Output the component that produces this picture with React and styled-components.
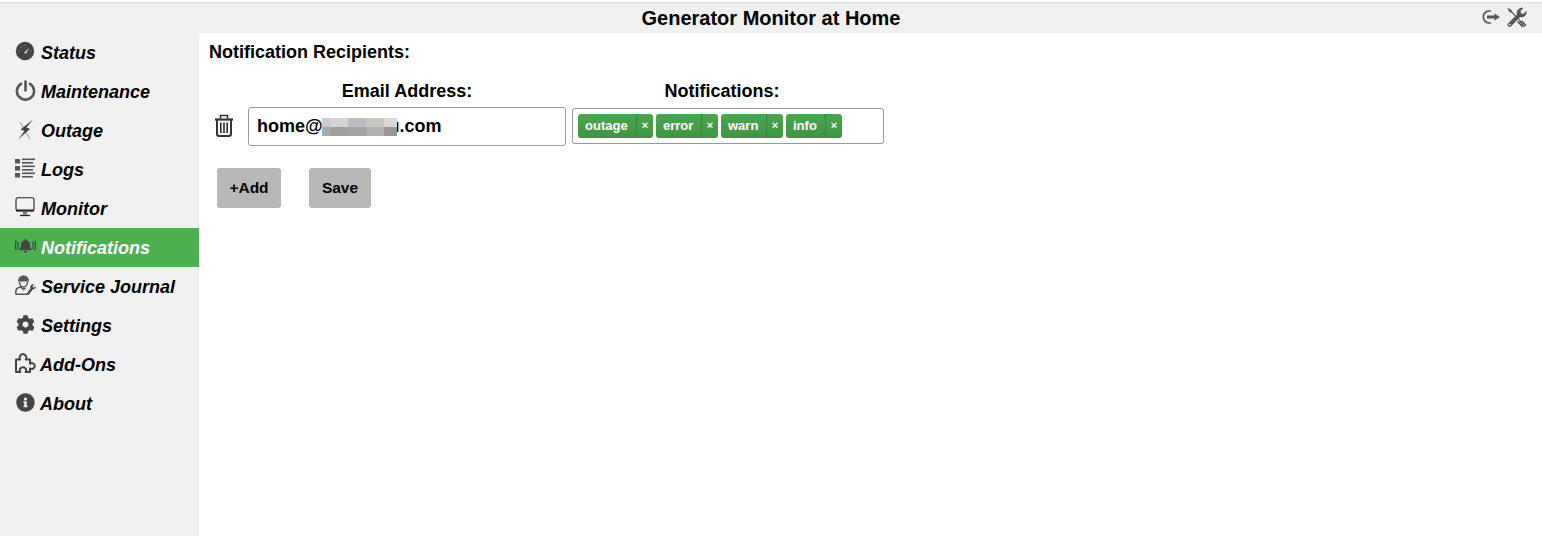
import React from "react";
import styled, { createGlobalStyle } from "styled-components";
import { FaCog, FaInfoCircle } from "react-icons/fa";

const Global = createGlobalStyle`
  html, body { margin: 0; padding: 0; background: #fff; }
  body { font-family: "Liberation Sans", Arial, sans-serif; }
`;

const Page = styled.div`
  height: 536px;
  overflow: hidden;
  padding-top: 2px;
  box-sizing: border-box;
  display: flex;
  flex-direction: column;
`;

const Header = styled.header`
  height: 31px;
  box-sizing: border-box;
  flex: none;
  border-top: 1px solid #ddd;
  background: #f0f0f0;
  display: flex;
  align-items: center;
  justify-content: center;
  position: relative;
`;

const Title = styled.h1`
  margin: 0;
  font-size: 20px;
  font-weight: bold;
  color: #000;
`;

const HeaderTools = styled.div`
  position: absolute;
  right: 15px;
  top: 4px;
  display: flex;
  gap: 5px;
  align-items: center;
`;

const Body = styled.div`
  flex: 1;
  display: flex;
  min-height: 0;
`;

const Sidebar = styled.nav`
  width: 199px;
  flex: none;
  background: #f1f1f1;
`;

const NavItem = styled.a`
  display: flex;
  align-items: center;
  height: 39px;
  box-sizing: border-box;
  padding: 2px 0 0 15px;
  font-size: 18px;
  font-weight: bold;
  font-style: italic;
  color: ${(p) => (p.$active ? "#fff" : "#000")};
  background: ${(p) => (p.$active ? "#4caf50" : "transparent")};
`;

const NavIcon = styled.span`
  width: ${(p) => (p.$tight ? 25 : 26)}px;
  height: 24px;
  margin-top: -5px;
  flex: none;
  color: #444;
  display: flex;
  align-items: center;
  svg { display: block; }
`;

const Main = styled.main`
  flex: 1;
  padding: 9px 10px;
`;

const Heading = styled.div`
  font-size: 18px;
  font-weight: bold;
  line-height: 20px;
  color: #000;
`;

const Columns = styled.div`
  display: flex;
  margin: 19px 0 0 39px;
  gap: 6px;
`;

const ColumnLabel = styled.div`
  width: ${(p) => p.$width}px;
  text-align: center;
  font-size: 18px;
  font-weight: bold;
  line-height: 20px;
  color: #000;
`;

const Row = styled.div`
  display: flex;
  align-items: flex-start;
  margin-top: 6px;
  gap: 6px;
`;

const TrashSlot = styled.span`
  width: 33px;
  padding: 7px 0 0 6px;
  flex: none;
  box-sizing: border-box;
  display: flex;
  color: #333;
`;

const EmailBox = styled.div`
  width: 318px;
  height: 39px;
  box-sizing: border-box;
  border: 1px solid #999;
  border-radius: 3px;
  padding-left: 8px;
  display: flex;
  align-items: center;
  font-size: 18px;
  font-weight: bold;
  color: #000;
  background: #fff;
`;

const Redacted = styled.span`
  display: grid;
  grid-template-columns: 8px 18px 18px 18px 13px;
  grid-template-rows: 9px 9px;
  position: relative;
  margin: 0 -8px 0 -1px;
  z-index: 1;
`;

const Pixel = styled.i`
  display: block;
  background: ${(p) => p.$color};
`;

const TagBox = styled.div`
  width: 312px;
  height: 36px;
  margin-top: 1px;
  box-sizing: border-box;
  border: 1px solid #999;
  border-radius: 3px;
  padding: 5px;
  display: flex;
  gap: 3px;
  background: #fff;
`;

const Tag = styled.span`
  display: flex;
  height: 24px;
  box-sizing: border-box;
  border-radius: 3px;
  background: linear-gradient(#4aa64e, #3f9443);
  color: #fff;
  font-size: 13px;
  font-weight: bold;
  line-height: 23px;
`;

const TagText = styled.span`
  padding: 0 7px;
  width: ${(p) => p.$width}px;
  box-sizing: border-box;
  white-space: nowrap;
`;

const TagClose = styled.span`
  width: 17px;
  border-left: 1px solid #37853b;
  box-sizing: border-box;
  text-align: center;
  font-size: 11px;
`;

const Actions = styled.div`
  display: flex;
  gap: 28px;
  margin: 22px 0 0 8px;
`;

const Button = styled.button`
  height: 40px;
  width: ${(p) => p.$width}px;
  padding: 0;
  border: 0;
  border-radius: 3px;
  background: #b8b8b8;
  color: #000;
  font-family: inherit;
  font-size: 15.5px;
  font-weight: bold;
`;

const GaugeIcon = () => (
  <svg width="20" height="20" viewBox="0 0 20 20">
    <circle cx="10" cy="10" r="9.200" fill="#444" />
    <path d="M9 11.800 14.600 6.600 10.800 13Z" fill="#ccc" />
    <g fill="#777">
      <circle cx="4" cy="10" r=".8" /><circle cx="5.600" cy="6" r=".8" />
      <circle cx="10" cy="4" r=".8" /><circle cx="16" cy="10" r=".8" />
    </g>
  </svg>
);

const PowerIcon = () => (
  <svg width="21" height="21" viewBox="0 0 21 21" fill="none" stroke="#555" strokeWidth="2.600" strokeLinecap="round">
    <path d="M10.500 1.500v9" />
    <path d="M6 3.800a8.600 8.600 0 1 0 9 0" />
  </svg>
);

const BoltIcon = () => (
  <svg width="20" height="21" viewBox="0 0 20 21">
    <path d="M5 3 15 20" stroke="#aaa" strokeWidth="1.200" />
    <path d="M18 .5 5.500 10.500 9.500 12 3 20.500 15 10 11.500 8.500Z" fill="#444" />
  </svg>
);

const ListIcon = () => (
  <svg width="20" height="21" viewBox="0 0 20 21" fill="#555">
    <rect x="0" y="1" width="5" height="4.500" /><rect x="0" y="8" width="5" height="4.500" /><rect x="0" y="15" width="5" height="4.500" />
    <rect x="7" y="0.500" width="13" height="1.600" /><rect x="7" y="4" width="11" height="1.600" />
    <rect x="7" y="7.500" width="13" height="1.600" /><rect x="7" y="11" width="11" height="1.600" />
    <rect x="7" y="14.500" width="13" height="1.600" /><rect x="7" y="18" width="11" height="1.600" />
  </svg>
);

const MonitorIcon = () => (
  <svg width="20" height="20" viewBox="0 0 20 20" fill="none" stroke="#222">
    <rect x="1" y="0.800" width="18" height="13" rx="2" strokeWidth="1.100" />
    <path d="M1 13.500h18" strokeWidth="2" />
    <path d="M9 15v2.500M11 15v2.500" strokeWidth="1.200" />
    <path d="M5 18.500h10" strokeWidth="1.300" />
  </svg>
);

const BellIcon = () => (
  <svg width="21" height="17" viewBox="0 0 21 17" fill="none" stroke="#444" strokeWidth="1.200">
    <path d="M3.500 4Q2 7.500 3.500 11M1.200 2.500Q-.4 7.500 1.200 12.500M17.500 4q1.500 3.500 0 7M19.800 2.500q1.600 5 0 10" />
    <path
      transform="translate(3.550 1) scale(0.65)"
      stroke="none"
      fill="#444"
      d="M10.700 21.300a2.700 2.700 0 0 0 2.700-2.700H8a2.700 2.700 0 0 0 2.700 2.700zM19.800 15c-.8-.9-2.300-2.200-2.300-6.500 0-3.300-2.300-5.900-5.400-6.500v-.9a1.400 1.400 0 0 0-2.800 0V2C6.200 2.600 3.900 5.200 3.900 8.500c0 4.300-1.500 5.600-2.300 6.500-.3.300-.4.600-.4.900 0 .7.500 1.300 1.400 1.300h16.200c.8 0 1.400-.6 1.400-1.300 0-.3-.1-.600-.4-.9z"
    />
  </svg>
);

const JournalIcon = () => (
  <svg width="21" height="20" viewBox="0 0 21 20" fill="none" stroke="#555" strokeWidth="1.500">
    <path d="M3 6.500C3 2.500 5.500.5 8.500.5S14 2.500 14 6.500Z" fill="#555" stroke="none" />
    <path d="M4.500 7c0 3 2 5 4 5s4-2 4-5" />
    <path d="M.800 19.200V16.500c0-2.500 2-4 4.700-4.500l3 2.500 2-1.500M.800 19.200H12" />
    <path d="M11 19.800 15.500 13.500c-.6-1.200-.2-2.600.7-3.500.9-.8 2-1 3-.6l-1.800 2 1.200 1.400 2-1.700c.3 1.500-.7 3.200-3 3.300l-3.800 5.300Z" fill="#444" stroke="none" />
  </svg>
);

const PuzzleIcon = () => (
  <svg width="21" height="20" viewBox="0 0 21 20" fill="none" stroke="#444" strokeWidth="2" strokeLinejoin="round">
    <path d="M1 6.500h4.200c-.8-1-1-2-.4-3C5.500 2 6.800 1 8 1s2.500 1 3.200 2.500c.5 1 .3 2-.5 3H15v4.200c1-.8 2-1 3-.4 1.200.7 1.800 1.700 1.800 2.700s-.6 2-1.800 2.700c-1 .6-2 .4-3-.4V19h-4.500c.8-1 1-2 .4-3-.7-1.200-1.700-1.800-2.700-1.800S5.700 14.800 5 16c-.6 1-.4 2 .4 3H1Z" />
  </svg>
);

const TrashIcon = () => (
  <svg width="18" height="23" viewBox="0 0 18 23" fill="none" stroke="currentColor" strokeWidth="2">
    <path d="M0 5.500h18" strokeWidth="2.200" />
    <path d="M5.500 4.500V1.500h7v3" strokeWidth="1.600" />
    <path d="M2 6v14c0 1.300.8 2 2 2h10c1.200 0 2-.7 2-2V6" />
    <path d="M5.800 8.500v10.500M9 8.500v10.500M12.200 8.500v10.500" strokeWidth="1.700" />
  </svg>
);

const LogoutIcon = () => (
  <svg width="19" height="14" viewBox="0 0 19 14" fill="none" stroke="#555" strokeWidth="1.600">
    <path d="M8.800 1.200A6 6 0 1 0 8.800 12.800" />
    <path d="M5 7h8" strokeWidth="3" />
    <path d="M12.500 3.500 18 7l-5.500 3.500Z" fill="#555" stroke="none" />
  </svg>
);

const ToolsIcon = () => (
  <svg width="21" height="20" viewBox="0 0 21 20" fill="#555">
    <path d="M1.500 1 5 2.500l1.500 2.500L15 14l1.500-.5L20.500 18 18 20l-4-3.800.5-1.700-8.700-8.500L3 4.500Z" />
    <path d="M13.500 12.500l5.500 5.500-2.500 2.500-5.500-5.500Z" />
    <path d="M2 16.500 11 7.500c-.7-2.500.2-4.500 2-5.800 1.500-1 3.200-1.200 4.500-.7L14.500 4l.5 2.200L17.300 7l3-3c.6 1.800 0 3.800-1.400 5-1.400 1.200-3 1.500-4.800 1L5 19.500c-.8.700-1.800.700-2.500 0L1.800 18.800c-.5-.6-.5-1.600.2-2.300Z" />
    <path d="M12.500 15 15 12.500M14.500 17 17 14.500M16.500 19 19 16.500" stroke="#f0f0f0" strokeWidth=".8" />
    <circle cx="3.800" cy="17.600" r=".9" fill="#f0f0f0" />
  </svg>
);

const navItems = [
  { label: "Status", icon: <GaugeIcon /> },
  { label: "Maintenance", icon: <PowerIcon /> },
  { label: "Outage", icon: <BoltIcon /> },
  { label: "Logs", icon: <ListIcon /> },
  { label: "Monitor", icon: <MonitorIcon /> },
  { label: "Notifications", icon: <BellIcon />, active: true },
  { label: "Service Journal", icon: <JournalIcon /> },
  { label: "Settings", icon: <FaCog size={19} style={{ marginLeft: 1 }} /> },
  { label: "Add-Ons", icon: <PuzzleIcon />, tight: true },
  { label: "About", icon: <FaInfoCircle size={19} style={{ marginLeft: 1 }} />, tight: true },
];

const tags = [
  { text: "outage", width: 58 },
  { text: "error", width: 45 },
  { text: "warn", width: 45 },
  { text: "info", width: 39 },
];

const pixels = [
  "#c8ccd2", "#d4d4d4", "#bcbcc0", "#c9c7c4", "#d8d8d8",
  "#a8acb2", "#a0a09a", "#a4a4a8", "#b4b0ae", "#989890",
];

export default function App() {
  return (
    <Page>
      <Global />
      <Header>
        <Title>Generator Monitor at Home</Title>
        <HeaderTools>
          <LogoutIcon />
          <ToolsIcon />
        </HeaderTools>
      </Header>
      <Body>
        <Sidebar>
          {navItems.map((item) => (
            <NavItem key={item.label} $active={item.active}>
              <NavIcon $tight={item.tight}>{item.icon}</NavIcon>
              {item.label}
            </NavItem>
          ))}
        </Sidebar>
        <Main>
          <Heading>Notification Recipients:</Heading>
          <Columns>
            <ColumnLabel $width={318}>Email Address:</ColumnLabel>
            <ColumnLabel $width={300}>Notifications:</ColumnLabel>
          </Columns>
          <Row>
            <TrashSlot><TrashIcon /></TrashSlot>
            <EmailBox>
              home@
              <Redacted>
                {pixels.map((c, i) => <Pixel key={i} $color={c} />)}
              </Redacted>
              u.com
            </EmailBox>
            <TagBox>
              {tags.map((t) => (
                <Tag key={t.text}>
                  <TagText $width={t.width}>{t.text}</TagText>
                  <TagClose>×</TagClose>
                </Tag>
              ))}
            </TagBox>
          </Row>
          <Actions>
            <Button $width={64}>+Add</Button>
            <Button $width={62}>Save</Button>
          </Actions>
        </Main>
      </Body>
    </Page>
  );
}
